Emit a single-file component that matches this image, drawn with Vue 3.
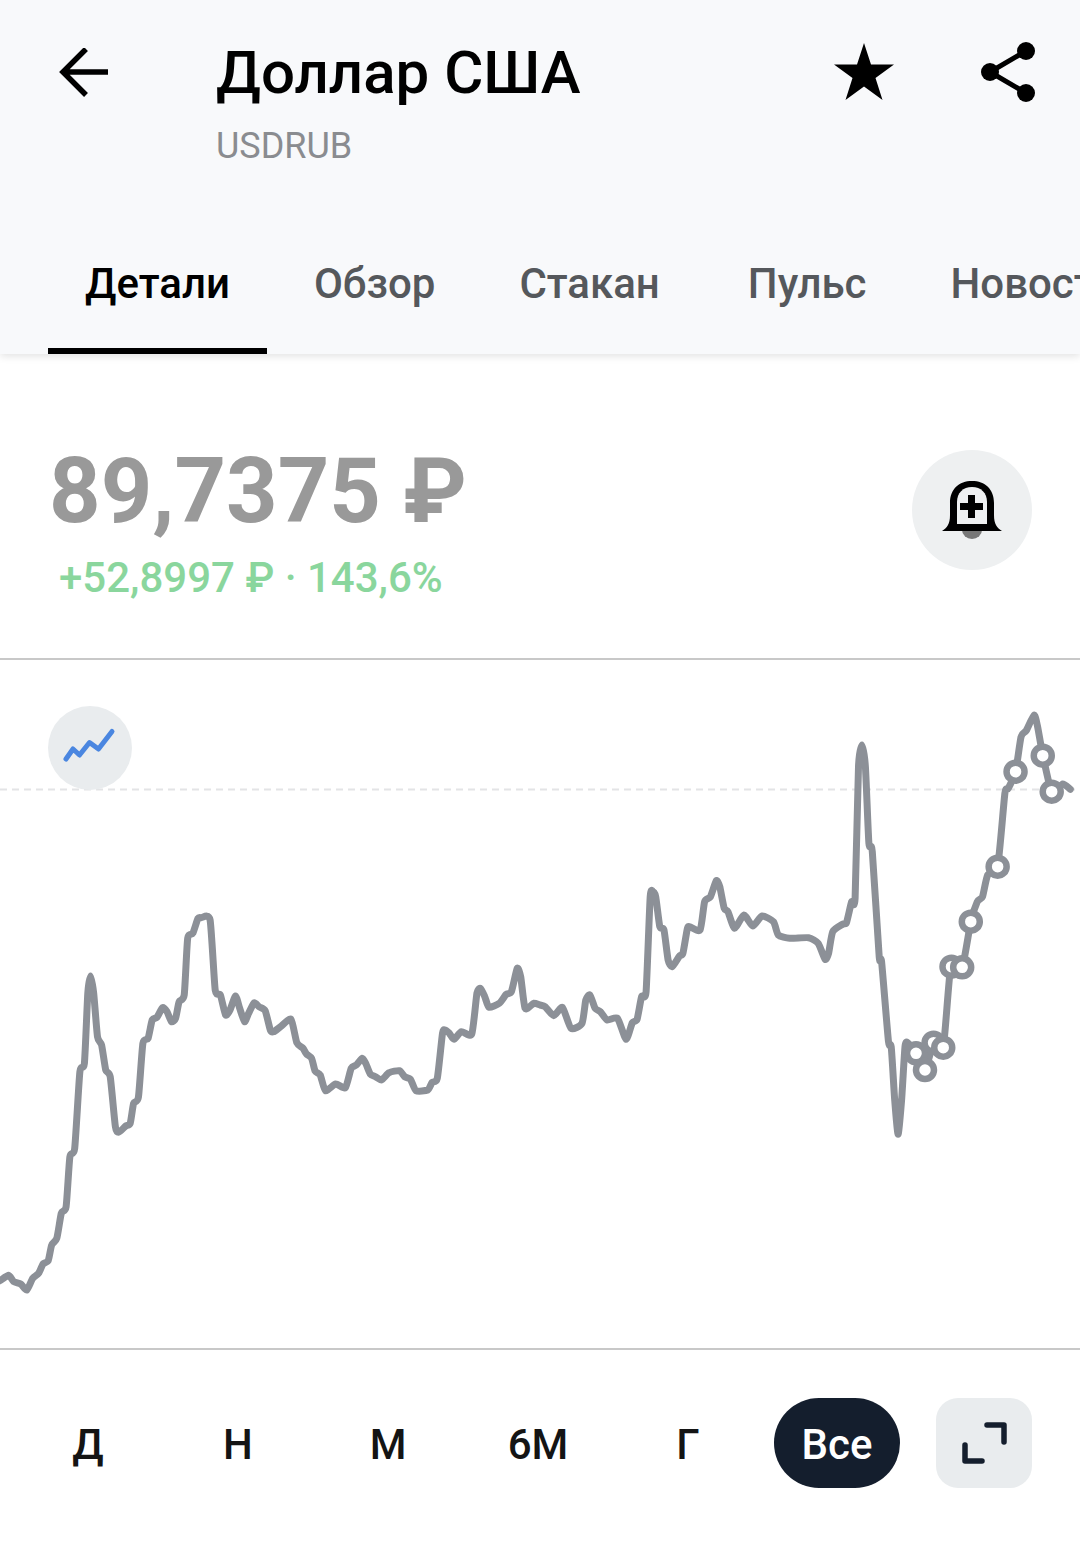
<script setup>
const left = [[0,1292],[25,1276],[40,1295],[60,1302],[78,1320],[95,1285],[112,1270],[125,1242],[140,1232],[150,1185],[165,1165],[178,1090],[192,1070],[203,920],[217,895],[232,665],[245,640],[255,430],[263,378],[272,430],[283,560],[295,585],[307,660],[320,680],[335,830],[345,847],[365,828],[378,820],[388,760],[402,742],[415,580],[430,565],[442,510],[456,502],[472,473],[485,485],[498,515],[510,505],[520,455],[535,435],[545,265],[560,250],[575,205],[585,203],[610,210],[625,420],[640,435],[655,495],[668,480],[684,438],[696,475],[710,515],[722,490],[738,458],[752,470],[770,482],[785,540],[795,545],[815,530],[845,508],[862,578],[880,595],[890,612],[905,625],[915,663],[930,675],[945,722],[975,702],[1003,713],[1020,655],[1035,645],[1052,625],[1062,640],[1075,672],[1090,680],[1108,690],[1130,668],[1160,662],[1175,680],[1192,688],[1208,722],[1242,720],[1255,697],[1270,685],[1285,550],[1292,540],[1305,550],[1318,568],[1340,545],[1370,552],[1385,430],[1395,415],[1408,440],[1420,472],[1450,460],[1470,433],[1485,425],[1502,355],[1512,380],[1525,475],[1550,460]]
const right = [[0,915],[15,920],[40,947],[65,922],[90,985],[122,970],[133,900],[145,885],[160,925],[175,935],[195,960],[225,955],[250,1018],[268,968],[282,958],[295,890],[308,875],[320,590],[328,575],[336,590],[348,680],[360,690],[372,780],[384,800],[405,768],[415,760],[428,685],[435,680],[465,690],[478,605],[495,590],[512,542],[522,560],[535,625],[546,635],[565,685],[592,645],[618,678],[645,648],[678,665],[692,705],[725,715],[780,713],[808,730],[828,778],[838,760],[850,695],[880,672],[890,668],[905,605],[915,595],[925,200],[935,135],[945,200],[955,430],[965,455],[985,770],[992,785],[1012,1025],[1020,1040],[1030,1200],[1040,1303],[1050,1200],[1060,1040],[1068,1028],[1092,1060],[1118,1110],[1143,1030],[1171,1043],[1193,800],[1226,802],[1251,665],[1270,605],[1285,590],[1300,525],[1329,500],[1350,280],[1360,265],[1381,215],[1397,110],[1412,92],[1435,45],[1445,80],[1460,165],[1486,275],[1518,252],[1540,268]]
const toLeft = ([x, y]) => [x / 2.904, 850 + y / 3 - 660]
const toRight = ([x, y]) => [540 + x / 2.904, 700 + y / 3 - 660]
const pts = [...left.map(toLeft), ...right.map(toRight)]

function smooth(p) {
  let d = `M${p[0][0].toFixed(1)} ${p[0][1].toFixed(1)}`
  for (let i = 0; i < p.length - 1; i++) {
    const a = p[Math.max(i - 1, 0)], b = p[i], c = p[i + 1], e = p[Math.min(i + 2, p.length - 1)]
    const k = 0.1
    d += `C${(b[0] + (c[0] - a[0]) * k).toFixed(1)} ${(b[1] + (c[1] - a[1]) * k).toFixed(1)} ${(c[0] - (e[0] - b[0]) * k).toFixed(1)} ${(c[1] - (e[1] - b[1]) * k).toFixed(1)} ${c[0].toFixed(1)} ${c[1].toFixed(1)}`
  }
  return d
}
const linePath = smooth(pts)
const markers = [[1092,1060],[1118,1110],[1143,1028],[1171,1043],[1195,800],[1226,802],[1251,665],[1329,500],[1381,215],[1460,167],[1486,275]].map(toRight)
const tabs = ['Детали', 'Обзор', 'Стакан', 'Пульс', 'Новости']
const ranges = ['Д', 'Н', 'М', '6М', 'Г']
</script>

<template>
  <main class="page">
    <header class="header">
      <div class="head">
        <svg class="back" viewBox="0 0 56 56" fill="none" stroke="#000" stroke-width="5.5">
          <path d="M52 24H8M30 1 7 24l23 23" />
        </svg>
        <div class="titles">
          <h1>Доллар США</h1>
          <p>USDRUB</p>
        </div>
        <svg class="star" viewBox="0 0 60 58"><polygon points="30,0 37,21.5 60,21.5 41.500,35 48.500,57 30,43.500 11.500,57 18.500,35 0,21.500 23,21.500" /></svg>
        <svg class="share" viewBox="0 0 58 62">
          <path d="M46 10 10 31l36 21" fill="none" stroke="#000" stroke-width="5" />
          <circle cx="46" cy="10" r="9" /><circle cx="10" cy="31" r="9" /><circle cx="46" cy="52" r="9" />
        </svg>
      </div>
      <nav class="tabs">
        <span v-for="(t, i) in tabs" :key="t" class="tab" :class="{ active: i === 0 }">{{ t }}</span>
      </nav>
    </header>

    <section class="quote">
      <div>
        <div class="price">89,7375 ₽</div>
        <div class="change">+52,8997 ₽ · 143,6%</div>
      </div>
      <button class="bell">
        <svg viewBox="0 0 60 58" width="60" height="58">
          <path d="M20 48h20v1a10 9 0 0 1-20 0Z" fill="#777" />
          <path d="M0 50c5-3 8-7 8-16V22C8 8 17 0 30 0s22 8 22 22v12c0 9 3 13 8 16Z" fill="#000" />
          <path d="M15 43V21C15 12 21 6 30 6s15 6 15 15v22Z" fill="#eef0f1" />
          <path d="M26 14h7v8h8v7h-8v8h-7v-8h-8v-7h8Z" fill="#000" />
        </svg>
      </button>
    </section>

    <section class="chart">
      <svg class="plot" viewBox="0 0 1080 688">
        <line x1="0" y1="129.500" x2="1080" y2="129.500" stroke="#e3e4e6" stroke-width="2" stroke-dasharray="7 5" />
        <path :d="linePath" fill="none" stroke="#8c9097" stroke-width="7" stroke-linecap="round" stroke-linejoin="round" />
        <circle v-for="(m, i) in markers" :key="i" :cx="m[0]" :cy="m[1]" r="9" fill="#fff" stroke="#8c9097" stroke-width="6.500" />
      </svg>
      <button class="mode">
        <svg viewBox="0 0 84 84" width="84" height="84" fill="none" stroke="#4a86e0" stroke-width="5" stroke-linecap="round" stroke-linejoin="round">
          <path d="M18 53l7-10 6.500 6 10-12.500 9 6.500 13.500-17.500" />
        </svg>
      </button>
    </section>

    <footer class="ranges">
      <span v-for="r in ranges" :key="r" class="range">{{ r }}</span>
      <span class="all">Все</span>
      <button class="expand">
        <svg viewBox="0 0 96 90" width="96" height="90" fill="none" stroke="#141e2d" stroke-width="5.500" stroke-linecap="round" stroke-linejoin="round">
          <path d="M51 27h17v17M29 47v16h17" />
        </svg>
      </button>
    </footer>
  </main>
</template>

<style>
html, body { margin: 0; background: #fff; }
</style>

<style scoped>
.page {
  width: 1080px;
  height: 1541px;
  overflow: hidden;
  background: #fff;
  font-family: Roboto, "Liberation Sans", sans-serif;
}
.header {
  height: 354px;
  background: #f8f9fb;
  box-shadow: 0 2px 8px rgba(0, 0, 0, 0.12);
  position: relative;
  z-index: 1;
}
.head {
  height: 240px;
  display: flex;
  align-items: flex-start;
}
.back { width: 56px; height: 56px; margin: 48px 0 0 56px; flex: none; }
.titles { margin-left: 104px; flex: 1; padding-top: 34px; }
h1 { margin: 0; font-size: 60px; line-height: 78px; font-weight: 500; color: #000; }
.titles p { margin: 13px 0 0; font-size: 36px; line-height: 42px; color: #8a8c90; }
.star { width: 60px; height: 58px; margin: 43px 0 0; flex: none; }
.share { width: 58px; height: 62px; margin: 41px 42px 0 86px; flex: none; }
.tabs { height: 114px; display: flex; gap: 10px; padding-left: 48px; overflow: hidden; }
.tab {
  flex: none;
  padding: 0 37px;
  height: 108px;
  line-height: 88px;
  font-size: 42px;
  font-weight: 500;
  color: #55585c;
  border-bottom: 6px solid transparent;
}
.tab:nth-child(4) { margin-left: 4px; }
.tab.active { color: #000; border-bottom-color: #000; }
.quote {
  height: 306px;
  box-sizing: border-box;
  padding: 96px 48px 0;
  display: flex;
  justify-content: space-between;
  align-items: flex-start;
  border-bottom: 2px solid #c8c8c8;
}
.price { font-size: 90px; line-height: 84px; font-weight: 700; color: #999; margin: 0 0 0 1px; }
.change { font-size: 42px; line-height: 48px; font-weight: 500; color: #8ad69d; margin: 20px 0 0 11px; }
.bell, .mode, .expand { border: 0; padding: 0; display: flex; align-items: center; justify-content: center; }
.bell { width: 120px; height: 120px; border-radius: 50%; background: #eef0f1; }
.chart { height: 688px; position: relative; border-bottom: 2px solid #c8c8c8; }
.plot { display: block; width: 1080px; height: 688px; }
.mode { position: absolute; left: 48px; top: 46px; width: 84px; height: 84px; border-radius: 50%; background: #e9ecee; }
.ranges { display: flex; align-items: center; padding: 48px 0 0 13px; }
.range { width: 150px; height: 90px; line-height: 94px; text-align: center; font-size: 42px; font-weight: 500; color: #141414; }
.all { width: 126px; height: 90px; margin-left: 11px; border-radius: 45px; background: #141e2d; color: #fff; font-size: 42px; font-weight: 500; line-height: 94px; text-align: center; }
.expand { width: 96px; height: 90px; margin-left: 36px; border-radius: 22px; background: #e9ecee; }
</style>
